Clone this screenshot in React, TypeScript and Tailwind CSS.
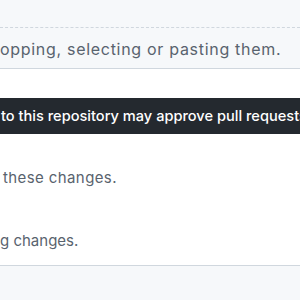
export default function App() {
  return (
    <div className="w-[300px] h-[300px] overflow-hidden bg-white font-['Inter',Arial,sans-serif] flex flex-col">
      {/* comment box footer */}
      <div className="h-[69px] shrink-0 bg-[#f6f8fa] border-b border-[#d0d7de] pt-[27px]">
        <div className="border-t border-dashed border-[#d0d7de] pt-[11px]">
          <p className="whitespace-nowrap text-[16px] leading-5 tracking-[0.7px] text-[#59636e]">
            opping, selecting or pasting them.
          </p>
        </div>
      </div>

      {/* tooltip */}
      <div className="mt-[29px] h-[36px] shrink-0 bg-[#24292f] overflow-hidden">
        <p className="whitespace-nowrap text-[14.6px] leading-[36px] font-medium text-white pl-[1px]">
          to this repository may approve pull requests.
        </p>
      </div>

      <div className="h-[132px] shrink-0 border-b border-[#d0d7de]">
        <p className="mt-[34px] whitespace-nowrap text-[15px] leading-5 tracking-[0.4px] text-[#59636e] pl-[3px]">
          these changes.
        </p>
        <p className="mt-[43px] whitespace-nowrap text-[15px] leading-5 text-[#59636e]">
          g changes.
        </p>
      </div>

      <div className="flex-1 bg-[#f6f8fa]" />
    </div>
  );
}
